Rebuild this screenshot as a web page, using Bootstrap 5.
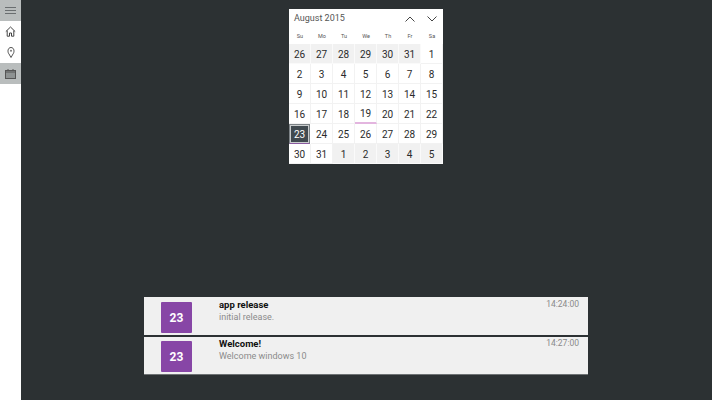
<!DOCTYPE html>
<html lang="en">
<head>
    <meta charset="UTF-8">
    <meta name="viewport" content="width=device-width, initial-scale=1.0">
    <title>Calendar</title>
    <link href="https://cdn.jsdelivr.net/npm/bootstrap@5.3.3/dist/css/bootstrap.min.css" rel="stylesheet" crossorigin="anonymous">
    <style>
        html, body { height: 400px; overflow: hidden; }
        body { background: #2c3133; font-family: Roboto, "Open Sans", sans-serif; }
        .app-shell { height: 400px; }
        .side-rail { width: 21px; background: #fff; }
        .rail-btn { width: 21px; height: 21px; }
        .rail-on { background: #b9bdbd; }
        .app-main { min-width: 0; padding-right: 1px; }

        .cal-box { width: 154px; height: 155px; margin-top: 9px; background: #fff; color: #2b2b2b; }
        .cal-head { height: 19px; padding: 0 6px 0 5px; font-size: 9px; color: #555; }
        .cal-arrows { gap: 12px; }
        .cal-week { display: grid; grid-template-columns: repeat(7, 22px); height: 16px; font-size: 5.5px; color: #555; }
        .cal-days { display: grid; grid-template-columns: repeat(7, 22px); grid-auto-rows: 20px; }
        .cal-day { font-size: 10px; padding-top: 1px; border: 1px solid #f2f2f2; border-width: 0 1px 1px 0; }
        .cal-muted { background: #f1f1f1; border-color: #fafafa; }
        .cal-today { border-bottom: 2px solid #e3b5df; }
        .cal-sel { background: #414a50; color: #fff; border: 1px solid #7c8286; border-bottom-color: #8a5aa0; box-shadow: inset 0 0 0 1px #c9cccd; margin: 0 1px 0 0; }

        .note-list { width: 444px; margin-top: 133px; }
        .note-row { height: 38px; background: #f0f0f0; }
        .note-row + .note-row { margin-top: 2px; border-bottom: 1px solid #6e7274; }
        .note-row + .note-row .note-tile { margin-top: 4px; }
        .note-row + .note-row .note-title { margin-top: 2px; }
        .note-row + .note-row .note-time { margin-top: 2px; }
        .note-tile { width: 31px; height: 31px; margin-left: 17px; margin-top: 5px; background: #8746a6; color: #fff; font-size: 12px; font-weight: 700; border-radius: 1px; }
        .note-body { margin-left: 27px; line-height: 1; }
        .note-title { font-size: 9.500px; font-weight: 700; color: #111; margin-top: 3px; }
        .note-text { font-size: 9px; color: #8b8b8b; margin-top: 3px; }
        .note-time { font-size: 8.500px; color: #8a8a8a; margin: 3px 9px 0 0; line-height: 1; }
    </style>
</head>
<body>
<div class="app-shell d-flex">
    <!-- left rail -->
    <div class="side-rail d-flex flex-column flex-shrink-0">
        <div class="rail-btn rail-on d-flex align-items-center justify-content-center">
            <svg width="11" height="7" viewBox="0 0 11 7"><path d="M0 .5h11M0 3.500h11M0 6.500h11" stroke="#6a6e70" stroke-width="1.200" fill="none"/></svg>
        </div>
        <div class="rail-btn d-flex align-items-center justify-content-center">
            <svg width="11" height="11" viewBox="0 0 11 11"><path d="M.8 5.600 5.500 1l4.700 4.600M2.200 4.600v5.600h2.300V7h2v3.200h2.300V4.600" stroke="#444" stroke-width="1" fill="none"/></svg>
        </div>
        <div class="rail-btn d-flex align-items-center justify-content-center">
            <svg width="8" height="11" viewBox="0 0 8 11"><path d="M4 10.500 2 7C.3 5.200.6.500 4 .5s3.700 4.700 2 6.500z" stroke="#555" stroke-width="1" fill="none"/><circle cx="4" cy="3.800" r="1" fill="#777"/></svg>
        </div>
        <div class="rail-btn rail-on d-flex align-items-center justify-content-center">
            <svg width="11" height="10" viewBox="0 0 11 10"><rect x=".5" y="1.500" width="10" height="8" fill="#8e9292" stroke="#555"/><path d="M0 3h11" stroke="#555"/><path d="M3 0v2M8 0v2" stroke="#555"/></svg>
        </div>
    </div>

    <div class="app-main flex-grow-1 d-flex flex-column align-items-center">
        <!-- calendar -->
        <div class="cal-box">
            <div class="cal-head d-flex align-items-center justify-content-between">
                <span>August 2015</span>
                <span class="cal-arrows d-flex align-items-center">
                    <svg width="10" height="6" viewBox="0 0 10 6"><path d="M.5 5.500 5 1l4.500 4.500" stroke="#444" fill="none"/></svg>
                    <svg width="10" height="6" viewBox="0 0 10 6"><path d="M.5.500 5 5 9.500.500" stroke="#444" fill="none"/></svg>
                </span>
            </div>
            <div class="cal-week text-center align-items-center" id="cal-week"></div>
            <div class="cal-days" id="cal-days"></div>
        </div>

        <!-- notifications -->
        <div class="note-list">
            <div class="note-row d-flex">
                <div class="note-tile d-flex align-items-center justify-content-center flex-shrink-0">23</div>
                <div class="note-body flex-grow-1">
                    <div class="note-title">app release</div>
                    <div class="note-text">initial release.</div>
                </div>
                <div class="note-time">14:24:00</div>
            </div>
            <div class="note-row d-flex">
                <div class="note-tile d-flex align-items-center justify-content-center flex-shrink-0">23</div>
                <div class="note-body flex-grow-1">
                    <div class="note-title">Welcome!</div>
                    <div class="note-text">Welcome windows 10</div>
                </div>
                <div class="note-time">14:27:00</div>
            </div>
        </div>
    </div>
</div>

<script type="text/javascript">
    // weekday header
    ["Su", "Mo", "Tu", "We", "Th", "Fr", "Sa"].forEach(d => {
        const el = document.createElement("div");
        el.textContent = d;
        document.getElementById("cal-week").appendChild(el);
    });

    // month grid, July tail + August + September head
    const days = [];
    [26, 27, 28, 29, 30, 31].forEach(n => days.push({ n, muted: true }));
    for (let n = 1; n <= 31; n++) days.push({ n, today: n === 19, sel: n === 23 });
    [1, 2, 3, 4, 5].forEach(n => days.push({ n, muted: true }));

    days.forEach(d => {
        const el = document.createElement("div");
        el.className = "cal-day d-flex align-items-center justify-content-center";
        if (d.muted) el.classList.add("cal-muted");
        if (d.today) el.classList.add("cal-today");
        if (d.sel) el.classList.add("cal-sel");
        el.textContent = d.n;
        document.getElementById("cal-days").appendChild(el);
    });
</script>
</body>
</html>
